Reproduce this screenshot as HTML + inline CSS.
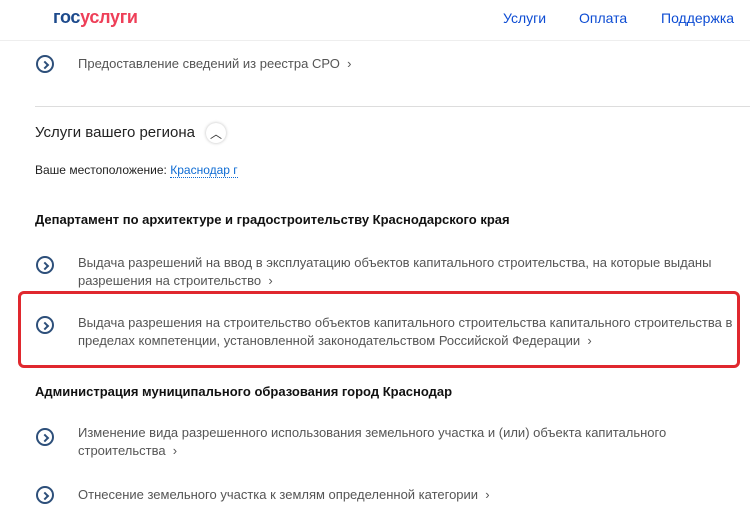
<!DOCTYPE html>
<html><head><meta charset="utf-8"><style>
body{margin:0;width:750px;height:522px;background:#fff;font-family:"Liberation Sans",sans-serif;position:relative;overflow:hidden}
.a{position:absolute;white-space:nowrap}
.t{font-size:13px;color:#555;line-height:18px}
.ic{position:absolute;width:18px;height:18px;border:2px solid #2d4f7a;border-radius:50%;box-sizing:border-box}
.ic:after{content:"";position:absolute;left:4px;top:4.5px;width:4px;height:4px;border-right:2px solid #2d4f7a;border-top:2px solid #2d4f7a;transform:rotate(45deg)}
.h{font-size:13px;font-weight:bold;color:#111}
</style></head><body>
<div class="a" style="left:53px;top:7px;font-size:18px;font-weight:bold;letter-spacing:-0.3px"><span style="color:#1d4a8c">гос</span><span style="color:#ee3f58">услуги</span></div>
<div class="a" style="left:503px;top:10px;font-size:14px;color:#0d4cd3">Услуги</div>
<div class="a" style="left:579px;top:10px;font-size:14px;color:#0d4cd3">Оплата</div>
<div class="a" style="left:661px;top:10px;font-size:14px;color:#0d4cd3">Поддержка</div>
<div class="a" style="left:0;top:40px;width:750px;height:1px;background:#eee"></div>
<div class="ic" style="left:36px;top:55px"></div>
<div class="a t" style="left:78px;top:55px">Предоставление сведений из реестра СРО &nbsp;›</div>
<div class="a" style="left:35px;top:106px;width:715px;height:1px;background:#ddd"></div>
<div class="a" style="left:35px;top:124px;font-size:15px;color:#222">Услуги вашего региона</div>
<div class="a" style="left:206px;top:123px;width:20px;height:20px;border-radius:50%;box-shadow:0 0 3px #bbb;text-align:center;font-size:12px;line-height:22px;color:#333">︿</div>
<div class="a" style="left:35px;top:163px;font-size:12px;color:#222">Ваше местоположение: <span style="color:#0d6bd3;border-bottom:1px dotted #0d6bd3">Краснодар г</span></div>
<div class="a h" style="left:35px;top:212px">Департамент по архитектуре и градостроительству Краснодарского края</div>
<div class="ic" style="left:36px;top:256px"></div>
<div class="a t" style="left:78px;top:254px">Выдача разрешений на ввод в эксплуатацию объектов капитального строительства, на которые выданы<br>разрешения на строительство &nbsp;›</div>
<div class="a" style="left:18px;top:291px;width:722px;height:77px;border:3px solid #e0282e;border-radius:6px;box-sizing:border-box"></div>
<div class="ic" style="left:36px;top:316px"></div>
<div class="a t" style="left:78px;top:314px">Выдача разрешения на строительство объектов капитального строительства капитального строительства в<br>пределах компетенции, установленной законодательством Российской Федерации &nbsp;›</div>
<div class="a h" style="left:35px;top:384px">Администрация муниципального образования город Краснодар</div>
<div class="ic" style="left:36px;top:428px"></div>
<div class="a t" style="left:78px;top:424px">Изменение вида разрешенного использования земельного участка и (или) объекта капитального<br>строительства &nbsp;›</div>
<div class="ic" style="left:36px;top:486px"></div>
<div class="a t" style="left:78px;top:486px">Отнесение земельного участка к землям определенной категории &nbsp;›</div>
</body></html>
